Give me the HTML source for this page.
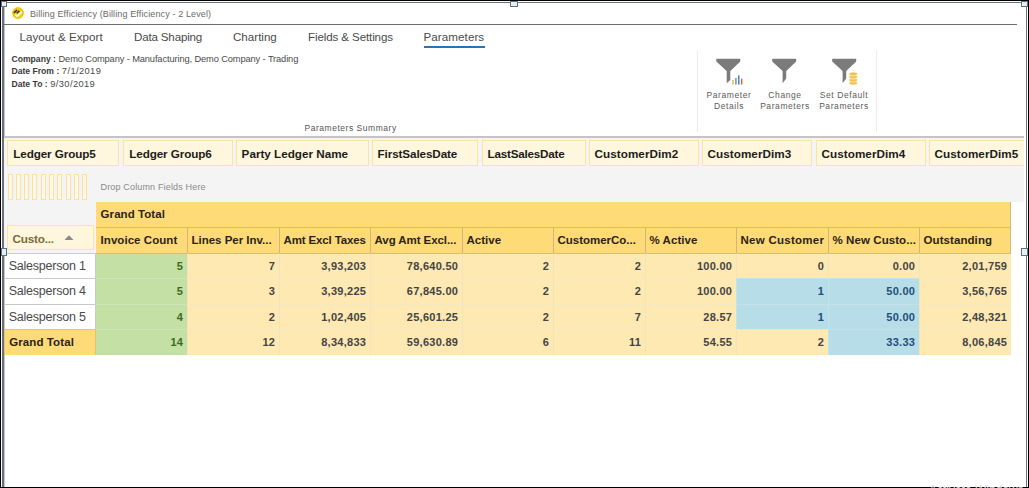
<!DOCTYPE html>
<html>
<head>
<meta charset="utf-8">
<title>Billing Efficiency</title>
<style>
html,body{margin:0;padding:0;}
body{width:1029px;height:488px;position:relative;overflow:hidden;background:#fff;font-family:"Liberation Sans",sans-serif;}
.abs{position:absolute;}
#frame{left:0;top:0;width:1027px;height:486px;border:1px solid #000;}
#win{left:2px;top:2px;width:1022px;height:484px;border-left:2px solid #66707e;border-top:1px solid #66707e;border-right:1px solid #66707e;box-sizing:content-box;}
.handle{border:1px solid #5f727e;background:#e3f0f4;box-sizing:border-box;z-index:5;}
#title{left:30px;top:6.6px;font-size:9px;color:#6a6a6a;white-space:nowrap;line-height:14px;letter-spacing:0.12px;}
#titleline{left:4px;top:24px;width:1013px;height:1px;background:#6e6e6e;}
.tab{top:29.3px;font-size:11.6px;color:#4a4a4a;white-space:nowrap;line-height:16px;}
#underline{left:424px;top:46px;width:61px;height:2px;background:#2a72b5;}
.ptxt{left:11.5px;font-size:9.3px;color:#4a4a4a;white-space:nowrap;line-height:12px;}
.ptxt b{color:#3a3a3a;font-size:8.6px;}
#psum{left:304.5px;top:122px;font-size:8.5px;color:#555;white-space:nowrap;line-height:12px;letter-spacing:0.53px;}
.sep{top:50px;width:1px;height:82px;background:#ececec;}
.lbl{font-size:8.5px;color:#5a5a5a;text-align:center;line-height:11.5px;white-space:nowrap;width:70px;top:89.8px;letter-spacing:0.58px;}
#grayline{left:4px;top:136px;width:1020px;height:2px;background:#c4c4c6;}
#filterbg{left:4px;top:138px;width:1020px;height:64px;background:#f4f4f4;overflow:hidden;}
#leftbg{left:4px;top:202px;width:92px;height:51px;background:#f4f4f4;}
.fbox{top:140px;height:26px;box-sizing:border-box;border:1px solid #fbe4a2;background:#fef7dd;font-weight:bold;font-size:11.7px;color:#1c1c1c;line-height:25.5px;padding-left:4.6px;letter-spacing:-0.07px;white-space:nowrap;overflow:hidden;}
.stripe{top:174px;width:5px;height:26px;box-sizing:border-box;border:1px solid #fbe19c;background:#fef8ea;}
#drop{left:100.5px;top:180.6px;font-size:9px;color:#8a8a8a;white-space:nowrap;line-height:12px;letter-spacing:0.16px;}
.hdr{background:#fedb76;box-sizing:border-box;font-weight:bold;font-size:11.5px;color:#2a2418;white-space:nowrap;overflow:hidden;line-height:25px;padding-left:4.6px;letter-spacing:0.06px;}
.h2{border-left:1px solid #cdb77f;border-top:1px solid #d8bb73;line-height:25.2px;padding-left:3.5px;}
.cell{box-sizing:border-box;font-weight:bold;font-size:11px;color:#444;text-align:right;padding-right:3.8px;line-height:24.8px;letter-spacing:0.27px;white-space:nowrap;background:#fee9b3;border-left:1px solid #f3e3bd;border-top:1px solid #f6e7c3;}
.g{background:#c4e0a4;color:#3b6b1c;border-color:#cfe5b6;}
.b{background:#b7dde8;color:#1f4e79;border-color:#c5e2ea;}
.rh{left:4px;width:92px;box-sizing:border-box;background:#fff;border:1px solid #c9c9c9;border-bottom:none;font-size:12.5px;color:#4a4a4a;line-height:25.5px;padding-left:3.7px;white-space:nowrap;letter-spacing:-0.22px;}
.gt{background:#fedb76;border-color:#e6c46f;font-weight:bold;font-size:11.5px;color:#2a2418;line-height:25.5px;letter-spacing:0.1px;padding-left:4.2px;}
</style>
</head>
<body>
<div id="frame" class="abs"></div>
<div id="win" class="abs"></div>
<div class="abs" style="left:4px;top:3px;width:1px;height:484px;background:#c3c7cd"></div>
<div class="abs handle" style="left:1px;top:1px;width:6px;height:6px"></div>
<div class="abs handle" style="left:510px;top:1px;width:8px;height:6px"></div>
<div class="abs handle" style="left:1021px;top:1px;width:7px;height:6px"></div>
<div class="abs handle" style="left:1px;top:248px;width:6px;height:8px"></div>
<div class="abs handle" style="left:1021px;top:248px;width:7px;height:8px"></div>

<!-- title bar -->
<svg class="abs" style="left:10.6px;top:6.2px" width="14" height="14" viewBox="0 0 14 14">
  <circle cx="7" cy="7" r="6.7" fill="#fdf7cf"/>
  <circle cx="7" cy="7" r="5.6" fill="#f0cf1a"/>
  <circle cx="7" cy="7" r="5.2" fill="none" stroke="#e3b912" stroke-width="0.9"/>
  <path d="M4.3 8.8 L6.2 10.2 L10.8 5.7" stroke="#fffbe6" stroke-width="1.9" fill="none"/>
  <path d="M2.9 6.9 L6 4 M5.7 7.3 L8.4 4.9" stroke="#3b2a10" stroke-width="1.5" fill="none"/>
</svg>
<div id="title" class="abs">Billing Efficiency (Billing Efficiency - 2 Level)</div>
<div id="titleline" class="abs"></div>

<!-- tabs -->
<div class="abs tab" style="left:19.5px;letter-spacing:0.05px">Layout &amp; Export</div>
<div class="abs tab" style="left:134px;letter-spacing:-0.18px">Data Shaping</div>
<div class="abs tab" style="left:233px">Charting</div>
<div class="abs tab" style="left:308px;letter-spacing:-0.12px">Fields &amp; Settings</div>
<div class="abs tab" style="left:423.5px;letter-spacing:0.08px">Parameters</div>
<div id="underline" class="abs"></div>

<!-- parameter summary -->
<div class="abs ptxt" style="top:52.6px"><b>Company :</b> <span style="letter-spacing:-0.12px">Demo Company - Manufacturing, Demo Company - Trading</span></div>
<div class="abs ptxt" style="top:65.1px"><b>Date From :</b> <span style="letter-spacing:0.4px">7/1/2019</span></div>
<div class="abs ptxt" style="top:77.8px"><b>Date To :</b> <span style="letter-spacing:0.4px">9/30/2019</span></div>
<div id="psum" class="abs">Parameters Summary</div>

<!-- ribbon buttons -->
<div class="abs sep" style="left:697px"></div>
<div class="abs sep" style="left:876px"></div>
<svg class="abs" style="left:712px;top:56px" width="36" height="32" viewBox="0 0 36 32">
  <path d="M4.3 2.7 H28.3 V5.5 L18.3 15 V24 L14.7 27.3 V15 L4.3 5.5 Z" fill="#7b7b7b"/>
  <rect x="20.3" y="24" width="1.4" height="4.6" fill="#e8b84a"/>
  <rect x="23.2" y="22" width="1.4" height="6.6" fill="#5f8fa8"/>
  <rect x="26.1" y="19.3" width="1.4" height="9.3" fill="#3f7fb5"/>
  <rect x="29" y="22.6" width="1.4" height="6" fill="#d9633a"/>
</svg>
<svg class="abs" style="left:768px;top:56px" width="36" height="32" viewBox="0 0 36 32">
  <path d="M4.2 2.7 H28.2 V5.5 L18.2 15 V22.6 L14.6 27.3 V15 L4.2 5.5 Z" fill="#7b7b7b"/>
</svg>
<svg class="abs" style="left:828px;top:56px" width="36" height="32" viewBox="0 0 36 32">
  <path d="M4.2 2.7 H28.2 V5.5 L18.2 15 V22.6 L14.6 27.3 V15 L4.2 5.5 Z" fill="#7b7b7b"/>
  <g fill="#f0c24f" stroke="#fff" stroke-width="0.6">
    <ellipse cx="25.2" cy="27" rx="4.3" ry="2"/>
    <ellipse cx="25.2" cy="24" rx="4.3" ry="2"/>
    <ellipse cx="25.2" cy="21" rx="4.3" ry="2"/>
    <ellipse cx="25.2" cy="18" rx="4.3" ry="2"/>
  </g>
</svg>
<div class="abs lbl" style="left:694px">Parameter<br>Details</div>
<div class="abs lbl" style="left:750px">Change<br>Parameters</div>
<div class="abs lbl" style="left:809px">Set Default<br>Parameters</div>

<!-- filter / field area -->
<div id="grayline" class="abs"></div>
<div id="filterbg" class="abs"></div>
<div id="leftbg" class="abs"></div>
<div class="abs fbox" style="left:7px;width:112px;letter-spacing:-0.1px;padding-left:5.2px">Ledger Group5</div>
<div class="abs fbox" style="left:123px;width:110px;letter-spacing:-0.1px;padding-left:5.2px">Ledger Group6</div>
<div class="abs fbox" style="left:236px;width:133px;letter-spacing:0px">Party Ledger Name</div>
<div class="abs fbox" style="left:372px;width:106px;letter-spacing:-0.115px">FirstSalesDate</div>
<div class="abs fbox" style="left:482px;width:104px;letter-spacing:-0.23px">LastSalesDate</div>
<div class="abs fbox" style="left:589px;width:110px;letter-spacing:0.04px">CustomerDim2</div>
<div class="abs fbox" style="left:702px;width:110px;letter-spacing:0.04px">CustomerDim3</div>
<div class="abs fbox" style="left:816px;width:110px;letter-spacing:0.04px">CustomerDim4</div>
<div class="abs fbox" style="left:929px;width:95px;border-right:none;letter-spacing:0.04px">CustomerDim5</div>

<div class="abs stripe" style="left:7.5px"></div>
<div class="abs stripe" style="left:15.8px"></div>
<div class="abs stripe" style="left:24.1px"></div>
<div class="abs stripe" style="left:32.4px"></div>
<div class="abs stripe" style="left:40.7px"></div>
<div class="abs stripe" style="left:49.0px"></div>
<div class="abs stripe" style="left:57.3px"></div>
<div class="abs stripe" style="left:65.6px"></div>
<div class="abs stripe" style="left:73.9px"></div>
<div class="abs stripe" style="left:82.2px"></div>
<div id="drop" class="abs">Drop Column Fields Here</div>

<div class="abs" style="left:929px;top:483.5px;font-size:12px;line-height:13px;color:#dedede;white-space:nowrap">Activate Windows</div>
<!-- grid -->
<div class="abs hdr" style="left:96px;top:202px;width:915px;height:25px;border-right:1px solid #d8bb73">Grand Total</div>
<div class="abs hdr h2" style="left:96px;top:227px;width:91px;height:26px;letter-spacing:0.05px;border-left:none;padding-left:4.6px">Invoice Count</div>
<div class="abs hdr h2" style="left:187px;top:227px;width:92px;height:26px;letter-spacing:-0.01px">Lines Per Inv...</div>
<div class="abs hdr h2" style="left:279px;top:227px;width:91px;height:26px;letter-spacing:-0.14px">Amt Excl Taxes</div>
<div class="abs hdr h2" style="left:370px;top:227px;width:92px;height:26px;letter-spacing:-0.07px">Avg Amt Excl...</div>
<div class="abs hdr h2" style="left:462px;top:227px;width:91px;height:26px;letter-spacing:0.03px">Active</div>
<div class="abs hdr h2" style="left:553px;top:227px;width:92px;height:26px;letter-spacing:-0.02px">CustomerCo...</div>
<div class="abs hdr h2" style="left:645px;top:227px;width:91px;height:26px;letter-spacing:0.05px">% Active</div>
<div class="abs hdr h2" style="left:736px;top:227px;width:92px;height:26px;letter-spacing:0.26px">New Customer</div>
<div class="abs hdr h2" style="left:828px;top:227px;width:91px;height:26px;letter-spacing:0.08px">% New Custo...</div>
<div class="abs hdr h2" style="left:919px;top:227px;width:92px;height:26px;letter-spacing:0.08px;border-right:1px solid #d8bb73">Outstanding</div>
<div class="abs fbox" id="custo" style="left:7px;top:225px;width:87px;height:25px;line-height:25px;letter-spacing:-0.2px;color:#7a6a3c">Custo...</div>
<svg class="abs" style="left:64px;top:234px" width="10" height="8" viewBox="0 0 10 8"><path d="M0.5 6 L5 1.2 L9.5 6 Z" fill="#8a8a8a"/></svg>
<div class="abs rh" style="top:253px;height:25px">Salesperson 1</div>
<div class="abs cell g" style="left:96px;top:253px;width:91px;height:25px;border-top-color:#d8bb73;border-left:none">5</div>
<div class="abs cell " style="left:187px;top:253px;width:92px;height:25px;border-top-color:#d8bb73">7</div>
<div class="abs cell " style="left:279px;top:253px;width:91px;height:25px;border-top-color:#d8bb73">3,93,203</div>
<div class="abs cell " style="left:370px;top:253px;width:92px;height:25px;border-top-color:#d8bb73">78,640.50</div>
<div class="abs cell " style="left:462px;top:253px;width:91px;height:25px;border-top-color:#d8bb73">2</div>
<div class="abs cell " style="left:553px;top:253px;width:92px;height:25px;border-top-color:#d8bb73">2</div>
<div class="abs cell " style="left:645px;top:253px;width:91px;height:25px;border-top-color:#d8bb73">100.00</div>
<div class="abs cell " style="left:736px;top:253px;width:92px;height:25px;border-top-color:#d8bb73">0</div>
<div class="abs cell " style="left:828px;top:253px;width:91px;height:25px;border-top-color:#d8bb73">0.00</div>
<div class="abs cell " style="left:919px;top:253px;width:92px;height:25px;border-top-color:#d8bb73">2,01,759</div>
<div class="abs rh" style="top:278px;height:26px">Salesperson 4</div>
<div class="abs cell g" style="left:96px;top:278px;width:91px;height:26px;border-left:none">5</div>
<div class="abs cell " style="left:187px;top:278px;width:92px;height:26px">3</div>
<div class="abs cell " style="left:279px;top:278px;width:91px;height:26px">3,39,225</div>
<div class="abs cell " style="left:370px;top:278px;width:92px;height:26px">67,845.00</div>
<div class="abs cell " style="left:462px;top:278px;width:91px;height:26px">2</div>
<div class="abs cell " style="left:553px;top:278px;width:92px;height:26px">2</div>
<div class="abs cell " style="left:645px;top:278px;width:91px;height:26px">100.00</div>
<div class="abs cell b" style="left:736px;top:278px;width:92px;height:26px">1</div>
<div class="abs cell b" style="left:828px;top:278px;width:91px;height:26px">50.00</div>
<div class="abs cell " style="left:919px;top:278px;width:92px;height:26px">3,56,765</div>
<div class="abs rh" style="top:304px;height:25px">Salesperson 5</div>
<div class="abs cell g" style="left:96px;top:304px;width:91px;height:25px;border-left:none">4</div>
<div class="abs cell " style="left:187px;top:304px;width:92px;height:25px">2</div>
<div class="abs cell " style="left:279px;top:304px;width:91px;height:25px">1,02,405</div>
<div class="abs cell " style="left:370px;top:304px;width:92px;height:25px">25,601.25</div>
<div class="abs cell " style="left:462px;top:304px;width:91px;height:25px">2</div>
<div class="abs cell " style="left:553px;top:304px;width:92px;height:25px">7</div>
<div class="abs cell " style="left:645px;top:304px;width:91px;height:25px">28.57</div>
<div class="abs cell b" style="left:736px;top:304px;width:92px;height:25px">1</div>
<div class="abs cell b" style="left:828px;top:304px;width:91px;height:25px">50.00</div>
<div class="abs cell " style="left:919px;top:304px;width:92px;height:25px">2,48,321</div>
<div class="abs rh gt" style="top:329px;height:26px">Grand Total</div>
<div class="abs cell g" style="left:96px;top:329px;width:91px;height:26px;border-left:none">14</div>
<div class="abs cell " style="left:187px;top:329px;width:92px;height:26px">12</div>
<div class="abs cell " style="left:279px;top:329px;width:91px;height:26px">8,34,833</div>
<div class="abs cell " style="left:370px;top:329px;width:92px;height:26px">59,630.89</div>
<div class="abs cell " style="left:462px;top:329px;width:91px;height:26px">6</div>
<div class="abs cell " style="left:553px;top:329px;width:92px;height:26px">11</div>
<div class="abs cell " style="left:645px;top:329px;width:91px;height:26px">54.55</div>
<div class="abs cell " style="left:736px;top:329px;width:92px;height:26px">2</div>
<div class="abs cell b" style="left:828px;top:329px;width:91px;height:26px">33.33</div>
<div class="abs cell " style="left:919px;top:329px;width:92px;height:26px">8,06,845</div>
</body>
</html>
